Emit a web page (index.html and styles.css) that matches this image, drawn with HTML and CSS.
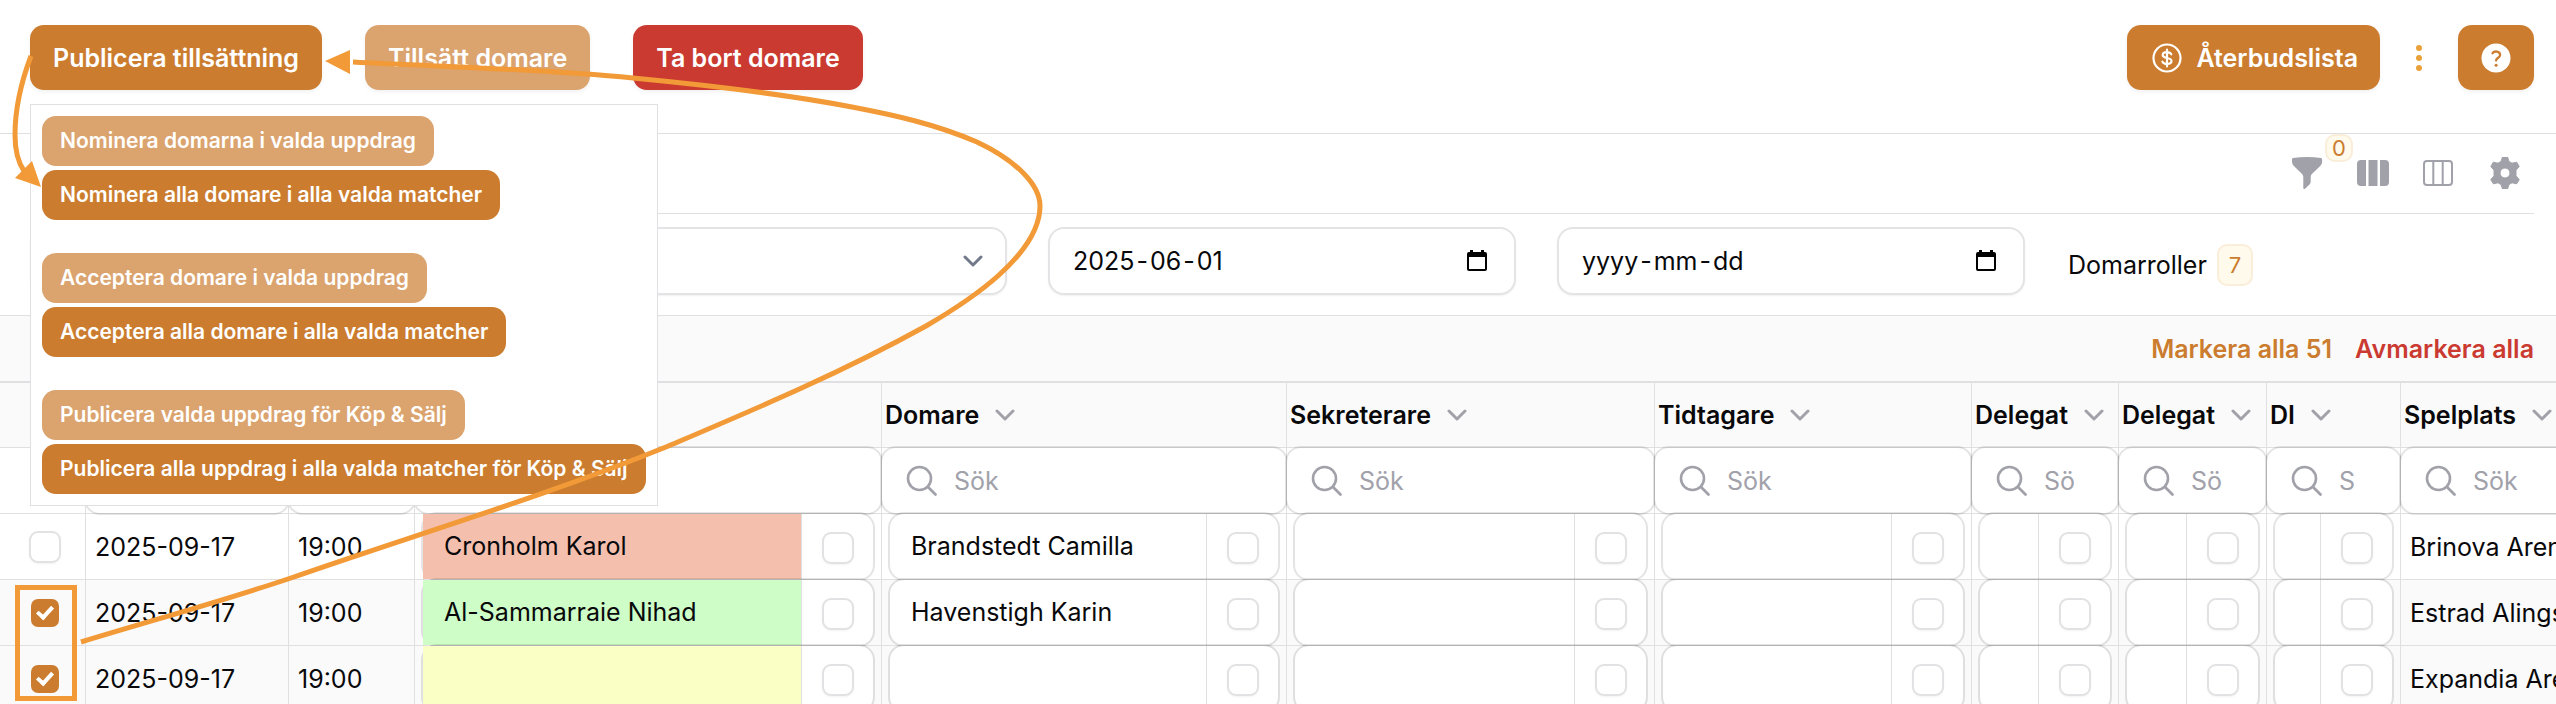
FILE: index.html
```html
<!DOCTYPE html>
<html lang="sv">
<head>
<meta charset="utf-8">
<title>Tillsättning</title>
<link rel="stylesheet" href="styles.css">
</head>
<body>
<svg class="sprite" aria-hidden="true">
  <symbol id="chevron" viewBox="0 0 20 14"><path d="M2 3l8 8 8-8" fill="none" stroke="currentColor" stroke-width="3" stroke-linecap="round" stroke-linejoin="round"/></symbol>
  <symbol id="search" viewBox="0 0 32 32"><circle cx="13.500" cy="13.500" r="11.500" fill="none" stroke="currentColor" stroke-width="2.600"/><path d="M22 22l7.500 7.500" stroke="currentColor" stroke-width="2.800" stroke-linecap="round"/></symbol>
  <symbol id="calendar" viewBox="0 0 20 22"><path d="M3 0h3v2h8V0h3v2h1a2 2 0 0 1 2 2v15a2 2 0 0 1-2 2H2a2 2 0 0 1-2-2V4a2 2 0 0 1 2-2h1zM2 7v12h16V7z" fill="currentColor" fill-rule="evenodd"/></symbol>
</svg>

<header class="actions">
  <div class="menu-anchor">
    <button class="btn" type="button" aria-expanded="true">Publicera tillsättning</button>
    <div class="menu">
      <div class="menu-group">
        <button class="btn btn-small btn-muted" type="button">Nominera domarna i valda uppdrag</button>
        <button class="btn btn-small" type="button">Nominera alla domare i alla valda matcher</button>
      </div>
      <div class="menu-group">
        <button class="btn btn-small btn-muted" type="button">Acceptera domare i valda uppdrag</button>
        <button class="btn btn-small" type="button">Acceptera alla domare i alla valda matcher</button>
      </div>
      <div class="menu-group">
        <button class="btn btn-small btn-muted" type="button">Publicera valda uppdrag för Köp &amp; Sälj</button>
        <button class="btn btn-small" type="button">Publicera alla uppdrag i alla valda matcher för Köp &amp; Sälj</button>
      </div>
    </div>
  </div>
  <button class="btn btn-muted" type="button">Tillsätt domare</button>
  <button class="btn btn-danger" type="button">Ta bort domare</button>
  <div class="actions-end">
    <button class="btn btn-icon-text" type="button">
      <svg class="icon-30" viewBox="0 0 30 30" fill="none" stroke="currentColor" stroke-width="2.200" stroke-linecap="round"><circle cx="15" cy="15" r="13.500"/><path d="M15 6.500v17M19.300 11.300c-.8-1.400-2.400-2.200-4.300-2.200-2.500 0-4.300 1.100-4.300 2.900 0 4.200 8.800 1.800 8.800 6 0 1.800-1.900 2.900-4.500 2.900-2.200 0-3.900-.8-4.600-2.200"/></svg>
      Återbudslista
    </button>
    <button class="dots" type="button" aria-label="Mer"><svg viewBox="0 0 8 28" fill="currentColor"><circle cx="4" cy="4" r="3"/><circle cx="4" cy="14" r="3"/><circle cx="4" cy="24" r="3"/></svg></button>
    <button class="btn btn-help" type="button" aria-label="Hjälp">
      <svg class="icon-30" viewBox="0 0 30 30"><circle cx="15" cy="15" r="14.500" fill="#fff"/><path d="M11.500 10.200c1.800-2.600 7.600-2.300 7.600 1.700 0 2.900-4 2.900-4 5.700" fill="none" stroke="#cb7c2e" stroke-width="2.300" stroke-linecap="round"/><circle cx="15.100" cy="22.300" r="1.500" fill="#cb7c2e"/></svg>
    </button>
  </div>
</header>

<div class="panel">
  <div class="toolbar">
    <button class="tool" type="button" aria-label="Filter">
      <svg class="icon-32" viewBox="0 0 32 32" fill="currentColor"><path d="M16 0c4.800 0 9.400.4 14 1.100.7.100 1.100.6 1.100 1.200v2.300c0 1.700-.7 3.300-1.900 4.500l-8.300 7.900c-.8.800-1.200 1.800-1.200 3v4.400c0 1.700-.9 3.200-2.300 4.200l-3.400 3.200c-.8.500-1.700 0-1.700-.9V20c0-1.100-.4-2.200-1.200-3L2.900 9.100C1.700 7.900 1 6.300 1 4.600V2.300c0-.6.400-1.100 1-1.200C6.600.4 11.200 0 16 0z"/></svg>
      <span class="badge badge-count">0</span>
    </button>
    <button class="tool" type="button" aria-label="Kolumner">
      <svg class="icon-32" viewBox="0 0 32 32" fill="currentColor"><path d="M4 3h5v26H4a4 4 0 0 1-4-4V7a4 4 0 0 1 4-4zM11.500 3h9v26h-9zM23 3h5a4 4 0 0 1 4 4v18a4 4 0 0 1-4 4h-5z"/></svg>
    </button>
    <button class="tool" type="button" aria-label="Kolumnvy">
      <svg class="icon-32" viewBox="0 0 32 32" fill="none" stroke="currentColor" stroke-width="2"><rect x="1" y="4" width="28" height="24" rx="3"/><path d="M10.300 4v24M19.700 4v24"/></svg>
    </button>
    <button class="tool" type="button" aria-label="Inställningar">
      <svg class="icon-32" viewBox="0 0 32 32"><path fill="currentColor" fill-rule="evenodd" d="M13.500 0h5l1.500 4.500 3 1.700 4.700-1 2.500 4.300-3.200 3.600v5.800l3.200 3.600-2.500 4.300-4.700-1-3 1.700-1.500 4.500h-5L12 27.500l-3-1.700-4.700 1-2.500-4.300L5 18.900v-5.800L1.800 9.500l2.500-4.300 4.700 1 3-1.700zM16 11a5 5 0 1 0 0 10 5 5 0 0 0 0-10z" stroke="currentColor" stroke-width="1" stroke-linejoin="round"/></svg>
    </button>
  </div>
  <div class="filters">
    <select class="field" aria-label="Säsong"><option></option></select>
    <div class="select-wrap">
      <select class="field" aria-label="Tävling"><option></option></select>
      <svg class="select-arrow"><use href="#chevron"/></svg>
    </div>
    <div class="field date" role="group" aria-label="Från datum">
      <input class="seg" aria-label="År" value="2025"><span>-</span><input class="seg" aria-label="Månad" value="06"><span>-</span><input class="seg" aria-label="Dag" value="01">
      <button class="picker" type="button" aria-label="Välj datum"><svg><use href="#calendar"/></svg></button>
    </div>
    <div class="field date" role="group" aria-label="Till datum">
      <input class="seg" aria-label="År" placeholder="yyyy"><span>-</span><input class="seg" aria-label="Månad" placeholder="mm"><span>-</span><input class="seg" aria-label="Dag" placeholder="dd">
      <button class="picker" type="button" aria-label="Välj datum"><svg><use href="#calendar"/></svg></button>
    </div>
    <div class="roles">Domarroller <span class="badge">7</span></div>
  </div>
</div>

<div class="selection">
  <button class="link" type="button">Markera alla 51</button>
  <button class="link link-danger" type="button">Avmarkera alla</button>
</div>

<div class="table-wrap">
<table class="grid">
  <colgroup><col class="c-check"><col class="c-date"><col class="c-time"><col class="c-ref1"><col class="c-ref2"><col class="c-sec"><col class="c-timer"><col class="c-del1"><col class="c-del2"><col class="c-di"><col></colgroup>
  <thead>
    <tr class="heads">
      <th></th><th></th><th></th><th></th>
      <th><span class="head">Domare<svg class="sort"><use href="#chevron"/></svg></span></th>
      <th><span class="head">Sekreterare<svg class="sort"><use href="#chevron"/></svg></span></th>
      <th><span class="head">Tidtagare<svg class="sort"><use href="#chevron"/></svg></span></th>
      <th><span class="head">Delegat<svg class="sort"><use href="#chevron"/></svg></span></th>
      <th><span class="head">Delegat<svg class="sort"><use href="#chevron"/></svg></span></th>
      <th><span class="head">DI<svg class="sort"><use href="#chevron"/></svg></span></th>
      <th><span class="head">Spelplats<svg class="sort"><use href="#chevron"/></svg></span></th>
    </tr>
    <tr class="searches">
      <td></td>
      <td><label class="search"><input aria-label="Sök datum"></label></td>
      <td><label class="search"><input aria-label="Sök tid"></label></td>
      <td><label class="search"><input aria-label="Sök domare 1"></label></td>
      <td><label class="search"><svg><use href="#search"/></svg><input aria-label="Sök domare" placeholder="Sök"></label></td>
      <td><label class="search"><svg><use href="#search"/></svg><input aria-label="Sök sekreterare" placeholder="Sök"></label></td>
      <td><label class="search"><svg><use href="#search"/></svg><input aria-label="Sök tidtagare" placeholder="Sök"></label></td>
      <td><label class="search"><svg><use href="#search"/></svg><input aria-label="Sök delegat" placeholder="Sök"></label></td>
      <td><label class="search"><svg><use href="#search"/></svg><input aria-label="Sök delegat 2" placeholder="Sök"></label></td>
      <td><label class="search"><svg><use href="#search"/></svg><input aria-label="Sök DI" placeholder="Sök"></label></td>
      <td><label class="search search-last"><svg><use href="#search"/></svg><input aria-label="Sök spelplats" placeholder="Sök"></label></td>
    </tr>
  </thead>
  <tbody>
    <tr>
      <td class="pick"><input type="checkbox" aria-label="Välj match 1"></td><td class="text">2025-09-17</td><td class="text">19:00</td>
      <td class="slot"><div class="box"><span class="name declined">Cronholm Karol</span><label class="mark"><input type="checkbox" aria-label="Välj Cronholm Karol"></label></div></td>
      <td class="slot"><div class="box"><span class="name">Brandstedt Camilla</span><label class="mark"><input type="checkbox" aria-label="Välj Brandstedt Camilla"></label></div></td>
      <td class="slot"><div class="box"><span class="name"></span><label class="mark"><input type="checkbox" aria-label="Välj sekreterare"></label></div></td>
      <td class="slot"><div class="box"><span class="name"></span><label class="mark"><input type="checkbox" aria-label="Välj tidtagare"></label></div></td>
      <td class="slot"><div class="box"><span class="name"></span><label class="mark"><input type="checkbox" aria-label="Välj delegat"></label></div></td>
      <td class="slot"><div class="box"><span class="name"></span><label class="mark"><input type="checkbox" aria-label="Välj delegat 2"></label></div></td>
      <td class="slot"><div class="box"><span class="name"></span><label class="mark"><input type="checkbox" aria-label="Välj DI"></label></div></td>
      <td class="text">Brinova Arena</td>
    </tr>
    <tr class="selected">
      <td class="pick"><input type="checkbox" checked aria-label="Välj match 2"></td><td class="text">2025-09-17</td><td class="text">19:00</td>
      <td class="slot"><div class="box"><span class="name accepted">Al-Sammarraie Nihad</span><label class="mark"><input type="checkbox" aria-label="Välj Al-Sammarraie Nihad"></label></div></td>
      <td class="slot"><div class="box"><span class="name">Havenstigh Karin</span><label class="mark"><input type="checkbox" aria-label="Välj Havenstigh Karin"></label></div></td>
      <td class="slot"><div class="box"><span class="name"></span><label class="mark"><input type="checkbox" aria-label="Välj sekreterare"></label></div></td>
      <td class="slot"><div class="box"><span class="name"></span><label class="mark"><input type="checkbox" aria-label="Välj tidtagare"></label></div></td>
      <td class="slot"><div class="box"><span class="name"></span><label class="mark"><input type="checkbox" aria-label="Välj delegat"></label></div></td>
      <td class="slot"><div class="box"><span class="name"></span><label class="mark"><input type="checkbox" aria-label="Välj delegat 2"></label></div></td>
      <td class="slot"><div class="box"><span class="name"></span><label class="mark"><input type="checkbox" aria-label="Välj DI"></label></div></td>
      <td class="text">Estrad Alingsås</td>
    </tr>
    <tr class="selected">
      <td class="pick"><input type="checkbox" checked aria-label="Välj match 3"></td><td class="text">2025-09-17</td><td class="text">19:00</td>
      <td class="slot"><div class="box"><span class="name nominated"></span><label class="mark"><input type="checkbox" aria-label="Välj domare 1"></label></div></td>
      <td class="slot"><div class="box"><span class="name"></span><label class="mark"><input type="checkbox" aria-label="Välj domare"></label></div></td>
      <td class="slot"><div class="box"><span class="name"></span><label class="mark"><input type="checkbox" aria-label="Välj sekreterare"></label></div></td>
      <td class="slot"><div class="box"><span class="name"></span><label class="mark"><input type="checkbox" aria-label="Välj tidtagare"></label></div></td>
      <td class="slot"><div class="box"><span class="name"></span><label class="mark"><input type="checkbox" aria-label="Välj delegat"></label></div></td>
      <td class="slot"><div class="box"><span class="name"></span><label class="mark"><input type="checkbox" aria-label="Välj delegat 2"></label></div></td>
      <td class="slot"><div class="box"><span class="name"></span><label class="mark"><input type="checkbox" aria-label="Välj DI"></label></div></td>
      <td class="text">Expandia Arena</td>
    </tr>
  </tbody>
</table>
</div>

<svg class="annotations" viewBox="0 0 1060 704" aria-hidden="true">
  <g fill="none" stroke="#f19a37" stroke-width="5">
    <rect x="17.500" y="587.500" width="57" height="111"/>
    <path d="M353 62C447 67 540 69 633 78C706 85 779 93 852 107C894 115 935 124 977 142C1015 160 1040 184 1040 206C1040 231 1020 256 999 275C979 293 950 312 926 326C839 374 753 410 666 447C540 498 414 535 288 579C219 602 150 621 81 642"/>
    <path d="M31 56C20 85 15 108 15 135C15 150 18 162 24 171"/>
  </g>
  <path d="M325 61l25-11v24zM41 187l-9-26-17 17z" fill="#f19a37"/>
</svg>
</body>
</html>
```
FILE: styles.css
```css
* { box-sizing: border-box; }

:root {
  --brand: #cb7c2e;
  --line: #e0e0e2;
  --icon: #a1a1aa;
  --ring: rgba(9, 9, 11, .11);
}

body {
  position: relative;
  height: 100vh;
  margin: 0;
  overflow: hidden;
  background: #fff;
  color: #09090b;
  font: 400 25px/36px Inter, "Liberation Sans", sans-serif;
}

button, input, select { margin: 0; font: inherit; color: inherit; }
button { padding: 0; border: 0; background: none; }
.sprite { position: absolute; width: 0; height: 0; }

/* Action bar */
.actions {
  display: flex;
  align-items: flex-start;
  gap: 43px;
  height: 134px;
  padding: 25px 22px 0 30px;
  border-bottom: 1px solid var(--line);
}
.menu-anchor { position: relative; }
.btn {
  height: 65px;
  padding: 0 23px;
  border-radius: 14px;
  background: var(--brand);
  color: #fff;
  font-weight: 600;
  white-space: nowrap;
  box-shadow: 0 2px 4px rgba(0, 0, 0, .06);
}
.btn-muted { background: #dba36e; }
.btn-danger { background: #ca3a31; }
.btn-small { height: 50px; padding: 0 18px; font-size: 21px; box-shadow: none; }
.actions-end { display: flex; align-items: center; gap: 35px; margin-left: auto; }
.btn-icon-text { display: flex; align-items: center; gap: 14px; padding: 0 22px 0 25px; }
.btn-help { display: flex; align-items: center; justify-content: center; width: 76px; padding: 0; }
.icon-30 { width: 30px; height: 30px; }
.dots { width: 8px; height: 28px; color: #e9a23b; }
.dots svg { display: block; width: 8px; height: 28px; }

.menu {
  position: absolute;
  z-index: 5;
  top: 79px;
  left: 0;
  display: flex;
  flex-direction: column;
  gap: 33px;
  padding: 11px;
  border: 1px solid var(--line);
  background: #fff;
}
.menu-group { display: flex; flex-direction: column; align-items: flex-start; gap: 4px; }

/* Filter panel */
.panel { padding: 0 22px 0 30px; border-bottom: 1px solid var(--line); }
.toolbar {
  display: flex;
  align-items: center;
  justify-content: flex-end;
  gap: 34px;
  height: 80px;
  padding: 0 13px 2px 0;
  border-bottom: 1px solid var(--line);
  color: var(--icon);
}
.tool { position: relative; height: 32px; }
.icon-32 { display: block; width: 32px; height: 32px; }
.badge {
  display: inline-flex;
  align-items: center;
  justify-content: center;
  width: 36px;
  height: 42px;
  border: 2px solid #faeeda;
  border-radius: 10px;
  background: #fffaeb;
  color: var(--brand);
  font-size: 22px;
}
.badge-count { position: absolute; top: -23px; left: 34px; width: 28px; height: 28px; line-height: 24px; }

.filters { display: grid; grid-template-columns: repeat(5, 1fr); gap: 41px; padding: 13px 0 20px; }
.field {
  width: 100%;
  height: 68px;
  border: 2px solid #e4e4e6;
  border-radius: 16px;
  background: #fff;
  appearance: none;
  box-shadow: 0 1px 2px rgba(0, 0, 0, .06);
}
.select-wrap { position: relative; }
.select-arrow { position: absolute; top: 27px; right: 24px; width: 20px; height: 14px; color: #71798a; }
.date { display: flex; align-items: center; padding: 0 27px 0 21px; }
.seg { field-sizing: content; padding: 0 2px; border: 0; background: none; outline: 0; }
.seg::placeholder { color: #09090b; opacity: 1; }
.picker { margin-left: auto; color: #000; }
.picker svg { display: block; width: 20px; height: 22px; }
.roles { display: flex; align-items: center; gap: 10px; padding: 8px 0 0 2px; }

/* Selection links */
.selection {
  display: flex;
  align-items: center;
  justify-content: flex-end;
  gap: 23px;
  height: 67px;
  padding-right: 22px;
  border-bottom: 2px solid var(--line);
  background: #fafafa;
}
.link { color: var(--brand); font-weight: 600; }
.link-danger { color: #ca3a31; }

/* Table */
.table-wrap { overflow: hidden; }
.grid { width: 100%; table-layout: fixed; border-collapse: separate; border-spacing: 0; }
.c-check { width: 86px; }
.c-date { width: 203px; }
.c-time { width: 126px; }
.c-ref1 { width: 467px; }
.c-ref2 { width: 405px; }
.c-sec { width: 368px; }
.c-timer { width: 317px; }
.c-del1 { width: 147px; }
.c-del2 { width: 148px; }
.c-di { width: 134px; }
.grid th, .grid td {
  height: 66px;
  padding: 0;
  border-right: 1px solid var(--line);
  border-bottom: 1px solid var(--line);
  text-align: left;
  white-space: nowrap;
}
.grid th:last-child, .grid td:last-child { border-right: 0; }
.grid .heads th { height: 65px; background: #fafafa; font-weight: 600; }
.head { display: flex; align-items: center; gap: 16px; padding-left: 3px; }
.sort { flex: none; width: 20px; height: 14px; color: var(--icon); }
.search {
  position: relative;
  display: flex;
  align-items: center;
  gap: 16px;
  height: 65px;
  padding: 0 44px 0 24px;
  border-radius: 14px;
  background: #fff;
  box-shadow: 0 0 0 2px var(--ring);
}
.search-last { margin-right: -40px; }
.search svg { flex: none; width: 32px; height: 32px; color: var(--icon); }
.search input { width: 100%; min-width: 0; padding: 0; border: 0; background: none; outline: 0; }
.search input::placeholder { color: var(--icon); opacity: 1; }
.selected { background: #fafafa; }
.grid .text { padding-left: 9px; overflow: hidden; }
.grid .pick { padding-left: 29px; }
.grid .slot { padding: 0 8px; }
.box {
  position: relative;
  display: flex;
  height: 65px;
  border-radius: 14px;
  background: #fff;
  box-shadow: 0 0 0 2px var(--ring);
}
.name { flex: 1; padding-left: 21px; line-height: 65px; }
.declined { background: #f5bfae; }
.accepted { background: #cefdc8; }
.nominated { background: #f9ffc5; }
.mark {
  display: flex;
  align-items: center;
  justify-content: center;
  width: 72px;
  padding-top: 3px;
  border-left: 1px solid var(--line);
}
input[type="checkbox"] {
  display: block;
  width: 32px;
  height: 32px;
  border: 2px solid #e2e2e4;
  border-radius: 9px;
  background: #fff;
  appearance: none;
  box-shadow: 0 1px 2px rgba(0, 0, 0, .05);
}
input[type="checkbox"]:checked {
  border-color: transparent;
  background: var(--brand) padding-box;
  box-shadow: none;
}
input[type="checkbox"]:checked::before {
  content: "";
  display: block;
  width: 6px;
  height: 12px;
  margin: 4px auto 0;
  border: solid #fff;
  border-width: 0 4px 4px 0;
  box-sizing: content-box;
  transform: rotate(42deg);
}

.annotations {
  position: absolute;
  z-index: 10;
  top: 0;
  left: 0;
  width: 1060px;
  height: 704px;
  pointer-events: none;
}
```
